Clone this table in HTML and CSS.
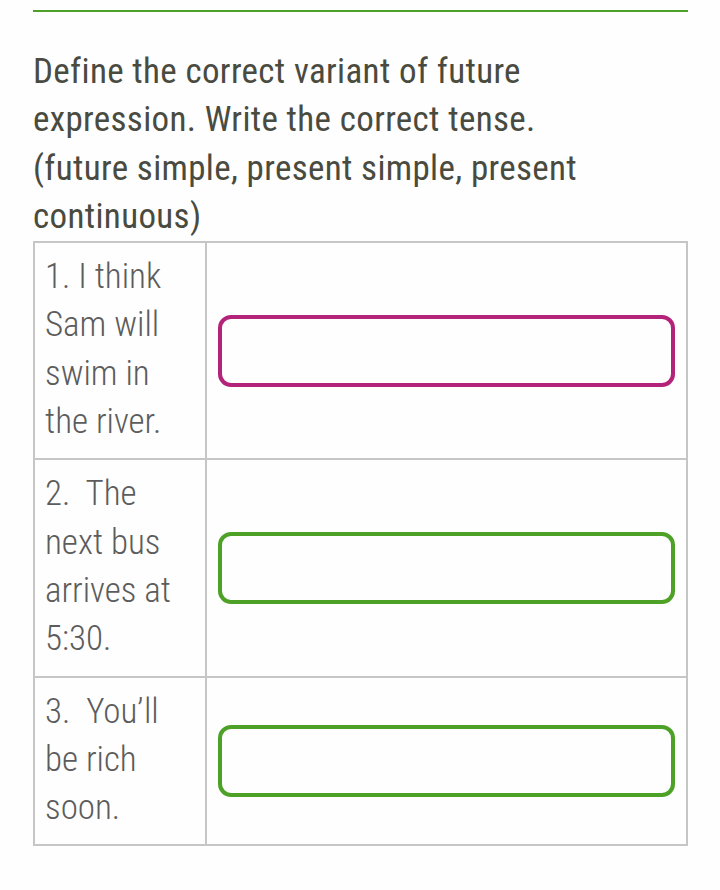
FILE: index.html
```html
<!DOCTYPE html>
<html>
<head>
<meta charset="utf-8">
<link rel="stylesheet" href="styles.css">
</head>
<body>
<div class="page">
  <hr class="rule">
  <p class="title">Define the correct variant of future<br>expression. Write the correct tense.<br>(future simple, present simple, present<br>continuous)</p>
  <table class="quiz">
    <tr class="r1">
      <td class="q">1. I think Sam will swim in the river.</td>
      <td class="a"><div class="box pink"></div></td>
    </tr>
    <tr class="r2">
      <td class="q">2.&nbsp; The next bus arrives at 5:30.</td>
      <td class="a"><div class="box green"></div></td>
    </tr>
    <tr class="r3">
      <td class="q">3.&nbsp; You’ll be rich soon.</td>
      <td class="a"><div class="box green"></div></td>
    </tr>
  </table>
</div>
</body>
</html>
```

FILE: styles.css
```css
html, body {
  margin: 0;
  padding: 0;
  background: #fefefe;
}
.page {
  padding: 10px 32px 0 33px;
  font-family: "Roboto Condensed", Roboto, sans-serif;
}
.rule {
  margin: 0;
  border: 0;
  height: 2px;
  background: #4ea127;
}
.title {
  margin: 36px 0 0 0;
  font-size: 35px;
  line-height: 48.3px;
  letter-spacing: 0.35px;
  color: #4a4b40;
}
.quiz {
  border-collapse: collapse;
  width: 655px;
}
.quiz td {
  border: 2px solid #c6c6c6;
  vertical-align: middle;
}
.q {
  width: 150px;
  padding: 10px 10px 12px 10px;
  font-family: "Roboto Condensed Light", "Roboto Condensed", Roboto, sans-serif;
  font-size: 35px;
  font-weight: 300;
  line-height: 48.3px;
  color: #5c5c5c;
}
.a {
  padding: 0 11px;
}
.box {
  height: 64px;
  border: 4px solid;
  border-radius: 13px;
}
.pink { border-color: #b4237a; }
.green { border-color: #4ea127; }
```
